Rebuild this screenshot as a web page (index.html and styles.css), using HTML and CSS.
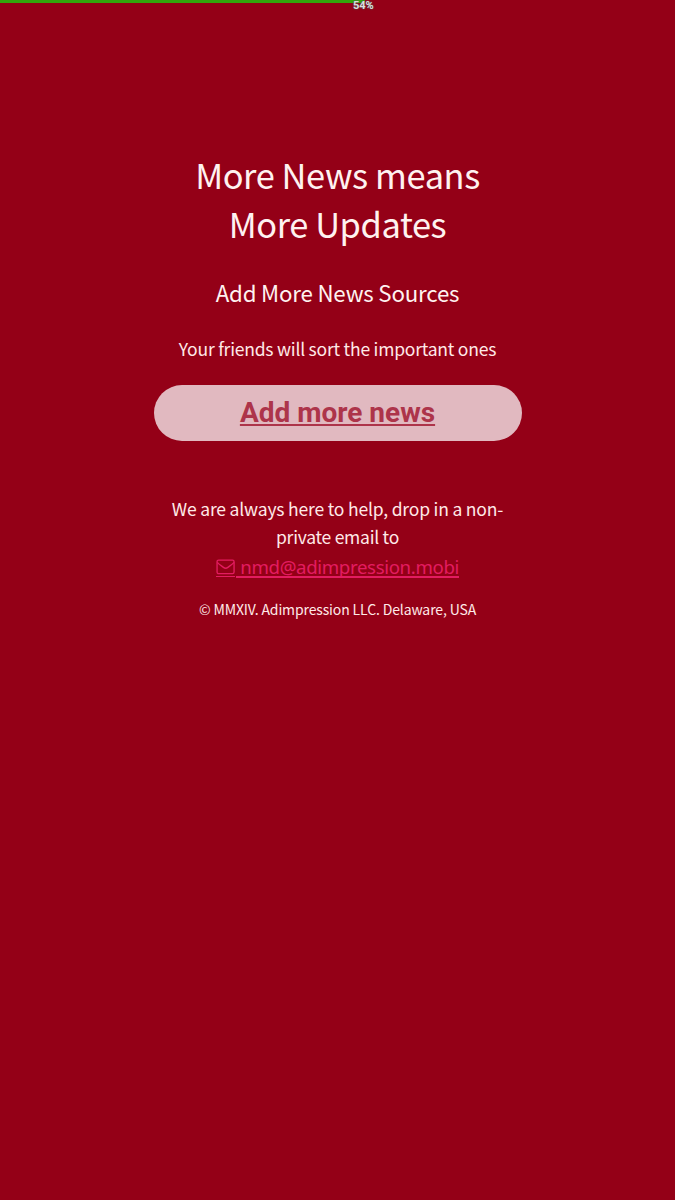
FILE: index.html
```html
<!DOCTYPE html>
<html lang="en">
<head>
<meta charset="utf-8">
<title>More News</title>
<link rel="stylesheet" href="styles.css">
</head>
<body>
<div class="progress"><div class="progress-bar" style="width:54%"></div><span class="progress-label">54%</span></div>
<main class="content">
<h1 class="title"><span>More News means</span><br><span>More Updates</span></h1>
<h2 class="subtitle"><span>Add More News Sources</span></h2>
<p class="lead"><span>Your friends will sort the important ones</span></p>
<a class="button" href="#"><span>Add more news</span></a>
<p class="help"><span class="help-first">We are always here to help, drop in a non-</span><br><span class="help-second">private email to</span></p>
<a class="email" href="#"><svg class="mail-icon" viewBox="0 0 20 16" fill="none" stroke="currentColor" stroke-width="1.4"><rect x="1.100" y=".9" width="17.6" height="14" rx="1.6"/><path d="M1.300 3.200c2 2.100 4.200 3.500 6.400 5.200 1.800 1.400 2.800 1.400 4.600 0 2.200-1.700 4.400-3.100 6.400-5.200"/></svg><span>nmd@adimpression.mobi</span></a>
<p class="copyright"><span>© MMXIV. Adimpression LLC. Delaware, USA</span></p>
</main>
</body>
</html>
```
FILE: styles.css
```css
* { box-sizing: border-box; }
body { margin: 0; min-height: 1200px; background: #940017; color: #fff2f0; font-family: "Noto Sans CJK SC", "Noto Sans", sans-serif; text-align: center; }
h1, h2, p { margin: 0; font-weight: 400; }
.progress { position: relative; height: 3px; }
.progress-bar { height: 3px; background: #32a60c; }
.progress-label { position: absolute; left: 353px; top: 0; font: bold 11px/12px Roboto, sans-serif; color: #ddd; text-shadow: 0 0 2px #555, 0 0 1px #555; }
.content { width: 368px; margin: 0 auto; padding-top: 147px; display: flex; flex-direction: column; white-space: nowrap; }
.title { font-size: 34.4px; line-height: 49px; letter-spacing: -.4px; }
.subtitle { margin-top: 27px; font-size: 22.3px; line-height: 34px; letter-spacing: -.2px; }
.lead { margin-top: 26px; font-size: 17.5px; line-height: 28px; letter-spacing: -.22px; color: #ffe9e8; }
.button { margin-top: 21.5px; height: 56px; border-radius: 28px; background: #e1b9c0; color: #ad344a; font: bold 28px/56px Roboto, sans-serif; text-decoration-thickness: 1.5px; text-underline-offset: 2px; }
.help { margin-top: 54.5px; font-size: 17.5px; line-height: 28px; letter-spacing: -.18px; color: #ffe9e8; }
.help-second { letter-spacing: -.26px; }
.email { width: 243px; margin: 2px auto 0; height: 27px; display: flex; align-items: center; color: #e31c60; font: 18.7px/27px "Noto Sans", sans-serif; letter-spacing: -.38px; text-decoration: none; background: linear-gradient(#e31c60, #e31c60) 0 23px / 19px 1px no-repeat, linear-gradient(#e31c60, #e31c60) 20px 23px / 223px 2px no-repeat; }
.mail-icon { width: 20px; height: 16px; margin-right: 5px; }
.copyright { margin-top: 17px; font-size: 14px; line-height: 24px; letter-spacing: -.13px; color: #ffe9e8; }
```
